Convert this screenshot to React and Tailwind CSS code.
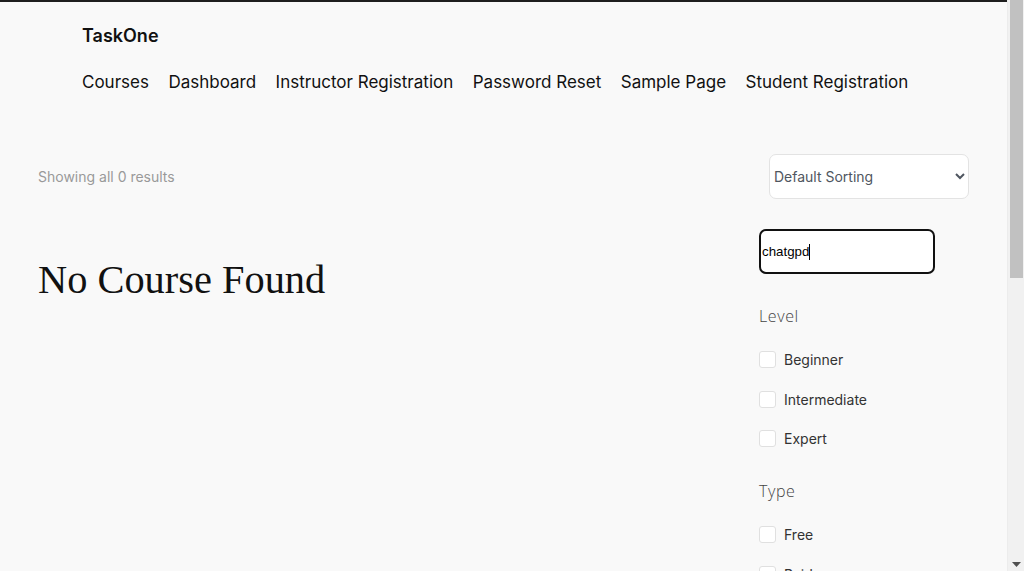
import React from 'react';

const navItems = ['Courses', 'Dashboard', 'Instructor Registration', 'Password Reset', 'Sample Page', 'Student Registration'];
const levels = ['Beginner', 'Intermediate', 'Expert'];
const types = ['Free', 'Paid'];

const FilterGroup = ({ title, items, className = '' }) => (
    <div className={className}>
        <h3 className="text-[16px] leading-[22px] font-light text-[#444] tracking-[0.6px]" style={{ fontFamily: '"Open Sans", sans-serif' }}>
            {title}
        </h3>
        <ul className="mt-[24px] flex flex-col gap-[22.5px]">
            {items.map((item) => (
                <li key={item} className="flex items-center gap-[8px] h-[17px]">
                    <span className="w-[17px] h-[17px] rounded-[3px] border border-[#e0e0e0] bg-white shrink-0"></span>
                    <span className="text-[14px] text-[#333]">{item}</span>
                </li>
            ))}
        </ul>
    </div>
);

// fake browser scrollbar on the right edge
const Scrollbar = () => (
    <div className="w-[17px] h-full bg-[#f1f1f1] border-l border-[#ececec] flex flex-col items-center justify-between">
        <div className="w-[13px] h-[278px] bg-[#c1c1c1]"></div>
        <svg width="9" height="6" viewBox="0 0 9 6" className="mb-[3px]">
            <path d="M0 0H9L4.5 5Z" fill="#505050" />
        </svg>
    </div>
);

export default function App() {
    return (
        <div className="h-[571px] flex overflow-hidden bg-[#f9f9f9]">
            <div className="flex-1 min-w-0 border-t-2 border-[#1e1e1e] text-[#111]" style={{ fontFamily: 'Inter, "Noto Sans", sans-serif' }}>
                {/* header */}
                <header className="pl-[82px] pt-[22px]">
                    <div className="text-[18px] leading-6 font-semibold">TaskOne</div>
                    <nav className="mt-[22px] flex gap-[19.5px] text-[17px] leading-6">
                        {navItems.map((n) => (
                            <a key={n} href="#" className="text-[#111]">{n}</a>
                        ))}
                    </nav>
                </header>

                <main className="px-[38px]">
                    <div className="mt-[60px] flex items-center justify-between">
                        <p className="text-[14px] text-[#999]">Showing all 0 results</p>
                        <select className="w-[200px] h-[45px] rounded-[7px] border border-[#e3e3e3] bg-white text-[14px] text-[#4f5660] pl-0 pr-[6px]" defaultValue="default">
                            <option value="default">Default Sorting</option>
                        </select>
                    </div>

                    <div className="mt-[30px] flex justify-between">
                        <h1 className="mt-[27px] text-[40.4px] leading-[48px] text-[#111]" style={{ fontFamily: '"Liberation Serif", serif' }}>
                            No Course Found
                        </h1>

                        <aside className="w-[210px]">
                            <div className="w-[176px] h-[45px] rounded-[7px] border-2 border-[#111] bg-white flex items-center pl-[1px] pt-[1px]" style={{ fontFamily: '"Liberation Sans", Arial, sans-serif' }}>
                                <span className="text-[13.3px] text-black">chatgpd</span>
                                <span className="w-px h-[16px] bg-black"></span>
                            </div>
                            <FilterGroup title="Level" items={levels} className="mt-[31px]" />
                            <FilterGroup title="Type" items={types} className="mt-[33px]" />
                        </aside>
                    </div>
                </main>
            </div>
            <Scrollbar />
        </div>
    );
}
